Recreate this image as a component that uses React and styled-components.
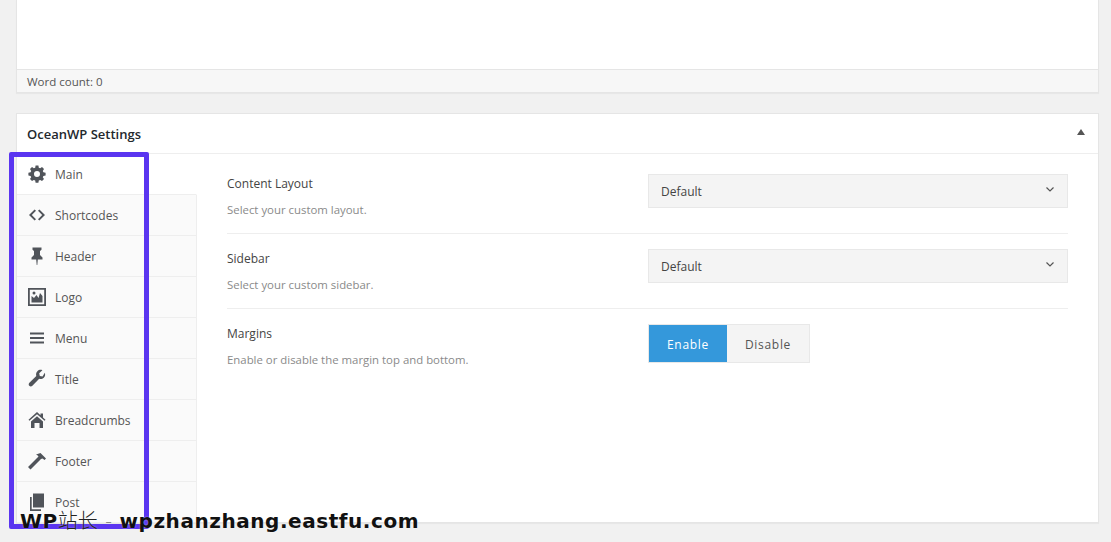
import React from 'react';
import styled, { createGlobalStyle } from 'styled-components';

const GlobalStyle = createGlobalStyle`
  html, body {
    margin: 0;
    height: 542px;
    overflow: hidden;
    background: #f1f1f1;
    font-family: "Open Sans", "Liberation Sans", sans-serif;
    color: #555;
  }
`;

const Page = styled.div`
  position: relative;
  height: 542px;
  padding: 0 12px 0 16px;
  box-sizing: border-box;
  overflow: hidden;
`;

const Panel = styled.div`
  background: #fff;
  border: 1px solid #e5e5e5;
  box-shadow: 0 1px 1px rgba(0, 0, 0, 0.04);
`;

const EditorPanel = styled(Panel)`
  border-top: 0;
  margin-bottom: 20px;
`;

const EditorArea = styled.div`
  height: 69px;
`;

const WordCount = styled.div`
  height: 22px;
  line-height: 24px;
  padding-left: 10px;
  font-size: 11.5px;
  color: #555;
  background: #f7f7f7;
  border-top: 1px solid #e5e5e5;
`;

const SettingsPanel = styled(Panel)`
  height: 410px;
  box-sizing: border-box;
`;

const PanelHeader = styled.div`
  display: flex;
  align-items: center;
  justify-content: space-between;
  height: 39px;
  padding: 0 13px 0 10px;
  border-bottom: 1px solid #eee;
  font-size: 13px;
  font-weight: 600;
  color: #23282d;
`;

const Caret = styled.span`
  width: 0;
  height: 0;
  border-left: 4px solid transparent;
  border-right: 4px solid transparent;
  border-bottom: 6px solid #555;
  margin-bottom: 3px;
`;

const PanelBody = styled.div`
  display: flex;
  height: 369px;
`;

const Nav = styled.ul`
  width: 180px;
  flex: none;
  margin: 0;
  padding: 0;
  list-style: none;
  overflow: hidden;
`;

const NavItem = styled.li`
  display: flex;
  align-items: center;
  gap: 8px;
  box-sizing: border-box;
  height: 41px;
  padding-left: 10px;
  font-size: 12px;
  color: #555;
  background: ${props => (props.$active ? '#fff' : '#fafafa')};
  border-bottom: 1px solid #eee;
  border-right: 1px solid ${props => (props.$active ? '#fff' : '#eee')};
`;

const IconBox = styled.svg`
  width: 20px;
  height: 20px;
  flex: none;
  fill: #50545a;
`;

const NavFill = styled.li`
  height: 100%;
  background: #fafafa;
  border-right: 1px solid #eee;
`;

const Content = styled.div`
  flex: 1;
  padding: 5px 30px 0;
`;

const Row = styled.div`
  display: flex;
  box-sizing: border-box;
  height: ${props => props.$height}px;
  padding-top: 15px;
  border-bottom: ${props => (props.$last ? '0' : '1px solid #eee')};
`;

const FieldInfo = styled.div`
  width: 421px;
  flex: none;
  padding-top: 1px;
`;

const Label = styled.div`
  font-size: 12px;
  line-height: 18px;
  color: #444;
`;

const Hint = styled.div`
  margin-top: 9px;
  font-size: 11.4px;
  line-height: 16px;
  color: #8a8a8a;
`;

const Select = styled.div`
  display: flex;
  align-items: center;
  justify-content: space-between;
  box-sizing: border-box;
  width: 420px;
  height: 34px;
  padding: 0 12px;
  font-size: 12px;
  color: #444;
  background: #f4f4f4;
  border: 1px solid #e8e8e8;
`;

const Chevron = styled.svg`
  width: 8px;
  height: 5px;
  margin: 0 1px 3px 0;
  fill: none;
  stroke: #555;
  stroke-width: 1.2;
`;

const Toggle = styled.div`
  display: flex;
  height: 39px;
  box-sizing: border-box;
  border: 1px solid #e8e8e8;
`;

const ToggleOption = styled.div`
  display: flex;
  align-items: center;
  justify-content: center;
  width: ${props => props.$width}px;
  padding-top: 1px;
  box-sizing: border-box;
  font-size: 12px;
  letter-spacing: 0.7px;
  color: ${props => (props.$on ? '#fff' : '#555')};
  background: ${props => (props.$on ? '#3498db' : '#f4f4f4')};
`;

const Highlight = styled.div`
  position: absolute;
  left: 9px;
  top: 152px;
  width: 140px;
  height: 377px;
  box-sizing: border-box;
  border: 5px solid #5a35f0;
  border-radius: 2px;
`;

const Watermark = styled.div`
  position: absolute;
  left: 20px;
  top: 507px;
  font-family: "DejaVu Sans", "Noto Sans CJK SC", sans-serif;
  font-size: 20px;
  line-height: 26px;
  font-weight: 700;
  letter-spacing: 0.55px;
  color: #111;
  white-space: nowrap;
  text-shadow: 0 0 2px rgba(255, 255, 255, 0.5);
`;

const CjkPart = styled.span`
  font-family: "Noto Sans CJK SC", sans-serif;
  font-weight: 300;
  letter-spacing: 0;
  color: ${props => (props.$faint ? '#888' : '#222')};
`;

const Icon = ({ children }) => <IconBox viewBox="0 0 20 20">{children}</IconBox>;

const GearIcon = () => (
  <Icon>
    <path
      fillRule="evenodd"
      d="M8.6 2.500h2.800l.4 2.200 1.400.6 1.800-1.200 2 2-1.200 1.800.6 1.400 2.200.4v2.800l-2.200.4-.6 1.400 1.200 1.800-2 2-1.800-1.200-1.400.6-.4 2.200H8.600l-.4-2.200-1.400-.6-1.800 1.200-2-2 1.200-1.800-.6-1.400-2.200-.4V9.700l2.200-.4.6-1.400-1.200-1.800 2-2 1.800 1.200 1.400-.6z M10 8a3 3 0 1 0 0 6 3 3 0 0 0 0-6z"
      transform="translate(0 -1)"
    />
  </Icon>
);

const CodeIcon = () => (
  <Icon>
    <path d="M7.600 4.400 9 5.800 4.800 10 9 14.200l-1.400 1.400L2 10z M12.400 4.400 18 10l-5.600 5.600-1.400-1.400 4.200-4.200L11 5.800z" />
  </Icon>
);

const PinIcon = () => (
  <Icon>
    <path d="M5.500 1.500h9v2.200L13 5v4l2.500 2.500v2h-4.700l-.5 5.500h-.6l-.5-5.500H4.500v-2L7 9V5L5.500 3.700z" />
  </Icon>
);

const ImageIcon = () => (
  <Icon>
    <path
      fillRule="evenodd"
      d="M1 1h18v18H1z M2.800 2.800v14.400h14.400V2.800z M4.500 15.500V9l2.500 2 2.500-3 2 3 1.500-5 2.500 3v6.500z"
    />
    <circle cx="7" cy="6" r="1.500" />
  </Icon>
);

const MenuIcon = () => (
  <Icon>
    <path d="M3 4.500h14v2H3z M3 9h14v2H3z M3 13.500h14v2H3z" />
  </Icon>
);

const WrenchIcon = () => (
  <Icon>
    <path d="M17.800 3.700c.7 1.700.3 3.700-1 5-1.300 1.300-3 1.600-4.600 1.100L5.400 16.700c-.9.900-2.300.9-3.100.1s-.8-2.200.1-3.100l6.900-6.800c-.5-1.600-.2-3.400 1.100-4.700 1.300-1.300 3.300-1.700 5-1l-3.200 3.100.6 2.700 2.700.6z" />
  </Icon>
);

const HomeIcon = () => (
  <Icon>
    <path
      fillRule="evenodd"
      d="M10 2 13.500 5.200V3.500h2.500v4l2.500 2.300-.9 1L10 4.200l-7.600 6.600-.9-1z M4 11.500 10 6.200l6 5.300V18h-3.500v-5h-5v5H4z"
    />
  </Icon>
);

const HammerIcon = () => (
  <Icon>
    <path d="M9 3.500 L13.500 2 L19 7.500 L17.500 9 L15.500 7.500 L14 8 L3.500 18.500 L1 16 L11.500 5.500 Q10.500 4 9 3.500z" />
  </Icon>
);

const PageIcon = () => (
  <Icon>
    <path d="M6 1.500h11v14H6z M3 5h1.700v12.300H14V19H3z" />
  </Icon>
);

const navItems = [
  { label: 'Main', icon: <GearIcon />, active: true },
  { label: 'Shortcodes', icon: <CodeIcon /> },
  { label: 'Header', icon: <PinIcon /> },
  { label: 'Logo', icon: <ImageIcon /> },
  { label: 'Menu', icon: <MenuIcon /> },
  { label: 'Title', icon: <WrenchIcon /> },
  { label: 'Breadcrumbs', icon: <HomeIcon /> },
  { label: 'Footer', icon: <HammerIcon /> },
  { label: 'Post', icon: <PageIcon /> },
];

const DefaultSelect = () => (
  <Select>
    Default
    <Chevron viewBox="0 0 8 5">
      <path d="M.5.5 4 4 7.500.5" />
    </Chevron>
  </Select>
);

const App = () => (
  <Page>
    <GlobalStyle />
    <EditorPanel>
      <EditorArea />
      <WordCount>Word count: 0</WordCount>
    </EditorPanel>
    <SettingsPanel>
      <PanelHeader>
        OceanWP Settings
        <Caret />
      </PanelHeader>
      <PanelBody>
        <Nav>
          {navItems.map(item => (
            <NavItem key={item.label} $active={item.active}>
              {item.icon}
              {item.label}
            </NavItem>
          ))}
          <NavFill />
        </Nav>
        <Content>
          <Row $height={75}>
            <FieldInfo>
              <Label>Content Layout</Label>
              <Hint>Select your custom layout.</Hint>
            </FieldInfo>
            <DefaultSelect />
          </Row>
          <Row $height={75}>
            <FieldInfo>
              <Label>Sidebar</Label>
              <Hint>Select your custom sidebar.</Hint>
            </FieldInfo>
            <DefaultSelect />
          </Row>
          <Row $height={75} $last>
            <FieldInfo>
              <Label>Margins</Label>
              <Hint>Enable or disable the margin top and bottom.</Hint>
            </FieldInfo>
            <Toggle>
              <ToggleOption $on $width={78}>Enable</ToggleOption>
              <ToggleOption $width={82}>Disable</ToggleOption>
            </Toggle>
          </Row>
        </Content>
      </PanelBody>
    </SettingsPanel>
    <Highlight />
    <Watermark>
      WP<CjkPart>站长</CjkPart> <CjkPart $faint>-</CjkPart> wpzhanzhang.eastfu.com
    </Watermark>
  </Page>
);

export default App;
